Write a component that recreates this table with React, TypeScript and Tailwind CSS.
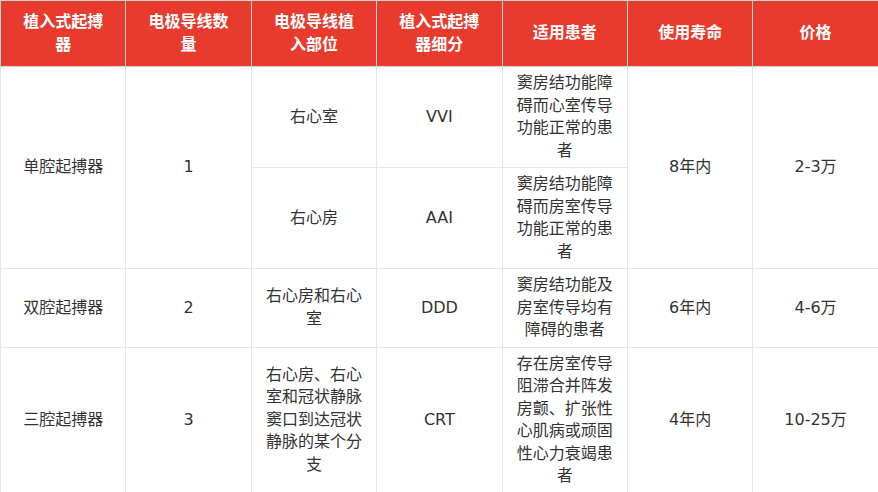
import React from 'react';

const headers = ['植入式起搏器', '电极导线数量', '电极导线植入部位', '植入式起搏器细分', '适用患者', '使用寿命', '价格'];

const td = 'border border-[#e6e6e6] px-[10px] py-[5px] text-center align-middle';

export default function App() {
  return (
    <div className="w-[878px] bg-white text-[#333] text-[16px] leading-[22.5px]" style={{ fontFamily: '"DejaVu Sans", "Noto Sans CJK SC", sans-serif' }}>
      <table className="w-[878px] table-fixed border-collapse">
        <colgroup>
          {headers.map((h) => <col key={h} className="w-[125.4px]" />)}
        </colgroup>
        <thead>
          <tr>
            <th className="border border-[#d4d4d4] bg-[#e93b2d] px-[15px] py-[10px] text-center align-middle font-bold text-white">{headers[0]}</th>
            {headers.slice(1).map((h) => (
              <th key={h} className="border border-[#d4d4d4] bg-[#e93b2d] px-[15px] py-[10px] text-center align-middle font-bold text-white">
                {h}
              </th>
            ))}
          </tr>
        </thead>
        <tbody>
          <tr>
            <td className={td} rowSpan={2}>单腔起搏器</td>
            <td className={td} rowSpan={2}>1</td>
            <td className={td}>右心室</td>
            <td className={td}>VVI</td>
            <td className={td}>窦房结功能障碍而心室传导功能正常的患者</td>
            <td className={td} rowSpan={2}>8年内</td>
            <td className={td} rowSpan={2}>2-3万</td>
          </tr>
          <tr>
            <td className={td}>右心房</td>
            <td className={td}>AAI</td>
            <td className={td}>窦房结功能障碍而房室传导功能正常的患者</td>
          </tr>
          <tr>
            <td className={td}>双腔起搏器</td>
            <td className={td}>2</td>
            <td className={td}>右心房和右心室</td>
            <td className={td}>DDD</td>
            <td className={td}>窦房结功能及房室传导均有障碍的患者</td>
            <td className={td}>6年内</td>
            <td className={td}>4-6万</td>
          </tr>
          <tr>
            <td className={td}>三腔起搏器</td>
            <td className={td}>3</td>
            <td className={td}>右心房、右心室和冠状静脉窦口到达冠状静脉的某个分支</td>
            <td className={td}>CRT</td>
            <td className={td}>存在房室传导阻滞合并阵发房颤、扩张性心肌病或顽固性心力衰竭患者</td>
            <td className={td}>4年内</td>
            <td className={td}>10-25万</td>
          </tr>
        </tbody>
      </table>
    </div>
  );
}
